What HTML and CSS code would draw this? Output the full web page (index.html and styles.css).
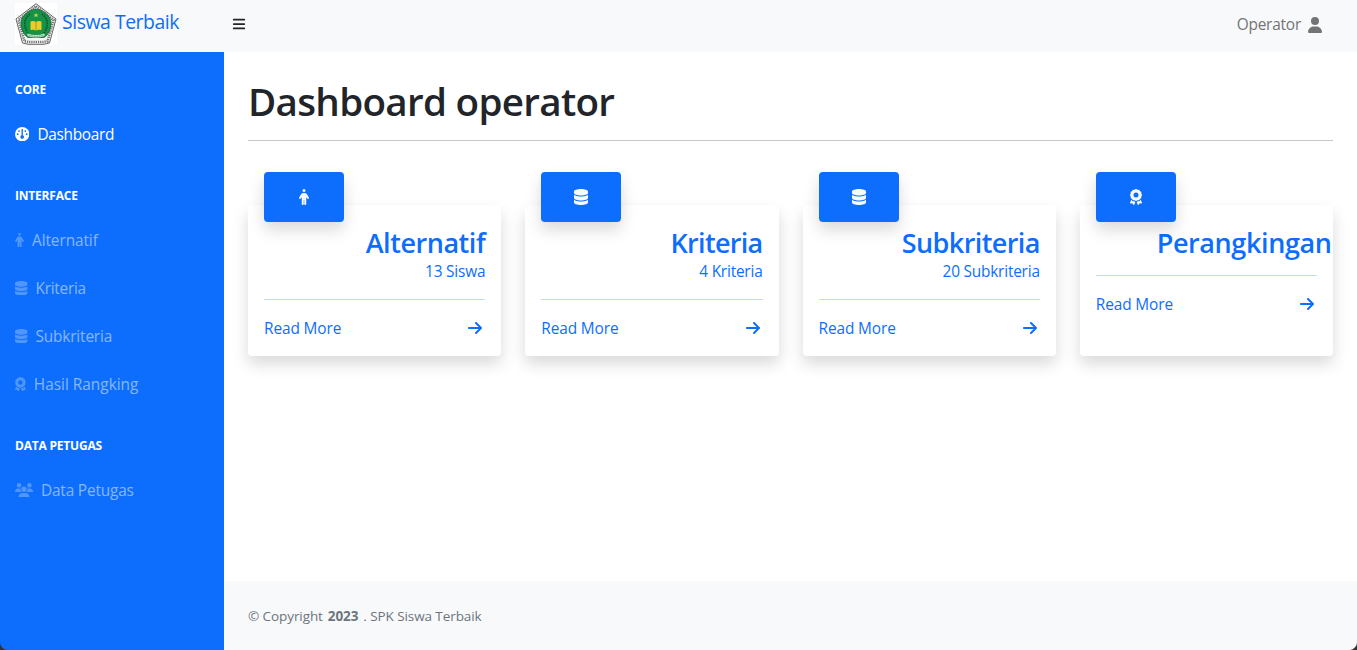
FILE: index.html
```html
<!DOCTYPE html>
<html lang="id">
<head>
<meta charset="utf-8">
<title>Siswa Terbaik</title>
<link rel="stylesheet" href="styles.css">
</head>
<body>
<svg class="sprite" aria-hidden="true">
  <symbol id="i-database" viewBox="0 0 448 512"><path d="M448 80v48c0 44.2-100.3 80-224 80S0 172.2 0 128V80C0 35.8 100.3 0 224 0S448 35.8 448 80zM393.2 214.7c20.8-7.4 39.9-16.9 54.8-28.6V288c0 44.2-100.3 80-224 80S0 332.2 0 288V186.1c14.9 11.8 34 21.2 54.8 28.6C99.7 230.7 159.5 240 224 240s124.3-9.3 169.2-25.3zM0 346.1c14.9 11.8 34 21.2 54.8 28.6C99.7 390.7 159.5 400 224 400s124.3-9.3 169.2-25.3c20.8-7.4 39.9-16.9 54.8-28.6V432c0 44.2-100.3 80-224 80S0 476.2 0 432V346.1z"/></symbol>
  <symbol id="i-user" viewBox="0 0 448 512"><path d="M224 256A128 128 0 1 0 224 0a128 128 0 1 0 0 256zm-45.7 48C79.8 304 0 383.8 0 482.3C0 498.7 13.3 512 29.7 512H418.3c16.4 0 29.7-13.3 29.7-29.7C448 383.8 368.2 304 269.7 304H178.3z"/></symbol>
  <symbol id="i-arrow" viewBox="0 0 448 512"><path d="M438.6 278.6c12.5-12.5 12.5-32.8 0-45.3l-160-160c-12.5-12.5-32.8-12.5-45.3 0s-12.5 32.8 0 45.3L338.8 224 32 224c-17.7 0-32 14.3-32 32s14.3 32 32 32l306.7 0L233.4 393.4c-12.5 12.5-12.5 32.8 0 45.3s32.8 12.5 45.3 0l160-160z"/></symbol>
  <symbol id="i-bars" viewBox="0 0 448 512"><rect y="64" width="448" height="64" rx="32"/><rect y="224" width="448" height="64" rx="32"/><rect y="384" width="448" height="64" rx="32"/></symbol>
  <symbol id="i-users" viewBox="0 0 640 512"><path d="M144 0a80 80 0 1 1 0 160A80 80 0 1 1 144 0zM512 0a80 80 0 1 1 0 160A80 80 0 1 1 512 0zM0 298.7C0 239.8 47.8 192 106.7 192h42.7c15.9 0 31 3.5 44.6 9.7c-1.3 7.2-1.9 14.7-1.9 22.3c0 38.2 16.8 72.5 43.3 96c-.2 0-.4 0-.7 0H21.3C9.6 320 0 310.4 0 298.7zM405.3 320c-.2 0-.4 0-.7 0c26.6-23.5 43.3-57.8 43.3-96c0-7.6-.7-15-1.9-22.3c13.6-6.3 28.7-9.7 44.6-9.7h42.7C592.2 192 640 239.8 640 298.7c0 11.8-9.6 21.3-21.3 21.3H405.3zM224 224a96 96 0 1 1 192 0 96 96 0 1 1 -192 0zM128 485.3C128 411.7 187.7 352 261.3 352H378.7C452.3 352 512 411.7 512 485.3c0 14.7-11.9 26.7-26.7 26.7H154.7c-14.7 0-26.7-11.9-26.7-26.7z"/></symbol>
  <symbol id="i-person" viewBox="0 0 320 512"><path d="M112 48a48 48 0 1 1 96 0 48 48 0 1 1-96 0zm40 304V480c0 17.700-14.300 32-32 32s-32-14.300-32-32V256.900L59.400 304.500c-9.100 15.100-28.800 20-43.900 10.900s-20-28.800-10.900-43.900l58.300-97c17.400-28.900 48.600-46.600 82.300-46.600h29.700c33.700 0 64.900 17.700 82.300 46.600l58.300 97c9.100 15.100 4.200 34.800-10.900 43.900s-34.800 4.200-43.900-10.900L232 256.900V480c0 17.700-14.300 32-32 32s-32-14.300-32-32V352H152z"/></symbol>
  <symbol id="i-award" viewBox="0 0 384 512"><path fill-rule="evenodd" d="M173.800 5.500c11-7.300 25.400-7.300 36.400 0L228 17.200c6 3.900 13 5.800 20.100 5.400l21.300-1.300c13.200-.8 25.600 6.400 31.500 18.200l9.600 19.100c3.200 6.400 8.400 11.500 14.700 14.700L344.500 83c11.800 5.900 19 18.300 18.200 31.500l-1.300 21.300c-.4 7.100 1.500 14.200 5.400 20.100l11.800 17.800c7.300 11 7.300 25.400 0 36.400L366.800 228c-3.900 6-5.800 13-5.400 20.100l1.300 21.300c.8 13.200-6.400 25.600-18.200 31.500l-19.100 9.600c-6.400 3.200-11.500 8.400-14.700 14.700L301 344.500c-5.900 11.800-18.300 19-31.500 18.200l-21.300-1.300c-7.100-.4-14.200 1.500-20.100 5.400l-17.800 11.800c-11 7.300-25.400 7.300-36.400 0L156 366.800c-6-3.900-13-5.800-20.100-5.400l-21.300 1.300c-13.200 .8-25.600-6.400-31.500-18.200l-9.600-19.100c-3.200-6.400-8.400-11.500-14.700-14.700L39.500 301c-11.800-5.900-19-18.300-18.200-31.500l1.300-21.300c.4-7.100-1.500-14.200-5.400-20.100L5.500 210.200c-7.300-11-7.300-25.400 0-36.400L17.200 156c3.900-6 5.800-13 5.400-20.100l-1.300-21.300c-.8-13.200 6.400-25.600 18.200-31.500l19.100-9.600C65 70.200 70.200 65 73.400 58.600L83 39.500c5.900-11.800 18.300-19 31.500-18.200l21.300 1.300c7.100 .4 14.200-1.500 20.100-5.400L173.800 5.500zM272 192a80 80 0 1 0-160 0 80 80 0 1 0 160 0z"/><path d="M1.300 441.800L44.400 339.300c.2 .1 .3 .2 .4 .4l9.600 19.100c11.700 23.200 36 37.300 62 35.800l21.300-1.300c.2 0 .5 0 .7 .2l17.800 11.800c5.100 3.300 10.500 5.900 16.100 7.700l-37.600 89.300c-2.300 5.500-7.400 9.200-13.300 9.700s-11.600-2.200-14.800-7.200L74.400 455.500l-56.100 8.300c-5.700 .8-11.400-1.500-15-6s-4.300-10.700-2-16zm248 60.400L211.700 413c5.600-1.800 11-4.300 16.100-7.700l17.800-11.800c.2-.1 .4-.2 .7-.2l21.300 1.300c26 1.500 50.300-12.600 62-35.800l9.600-19.100c.1-.2 .2-.3 .4-.4l43.200 102.500c2.200 5.300 1.400 11.400-2.100 16s-9.300 6.900-15 6l-56.100-8.300-32.200 49.200c-3.200 5-8.900 7.700-14.800 7.200s-11-4.300-13.300-9.700z"/></symbol>
  <symbol id="i-gauge" viewBox="0 0 512 512"><path fill-rule="evenodd" d="M0 256a256 256 0 1 1 512 0A256 256 0 1 1 0 256zm320 96c0-26.900-16.500-49.900-40-59.300V88c0-13.300-10.700-24-24-24s-24 10.700-24 24V292.700c-23.500 9.500-40 32.500-40 59.300 0 35.300 28.700 64 64 64s64-28.700 64-64zM144 176a32 32 0 1 0 0-64 32 32 0 1 0 0 64zm-16 80a32 32 0 1 0-64 0 32 32 0 1 0 64 0zm288 32a32 32 0 1 0 0-64 32 32 0 1 0 0 64zM400 144a32 32 0 1 0-64 0 32 32 0 1 0 64 0z"/></symbol>
</svg>

<header class="topnav">
  <a class="brand">
    <svg class="logo" viewBox="0 0 42 42">
      <rect width="42" height="42" fill="#fff"/>
      <path d="M21 .7 41 16 34.500 40 29 41.300H13L7.500 40 1 16Z" fill="#f6f6f6" stroke="#666" stroke-width="1"/>
      <path d="M21 3.200 38.500 17 32.500 38.300 28 39H14L9.500 38.300 3.500 17Z" fill="none" stroke="#777" stroke-width="2.600" stroke-dasharray="1.300 .9"/>
      <path d="M21 6C28 7 35 12 36 19c0 8-3 13-7 15.500H13C9 32 6 27 6 19 7 12 14 7 21 6Z" fill="#149447" stroke="#1b5c36" stroke-width=".8"/>
      <path d="M15 11c-6 4-7 12-2 19M27 11c6 4 7 12 2 19" fill="none" stroke="#0a542b" stroke-width="1.700" stroke-dasharray="1.500 1"/>
      <path d="m21 10 .8 1.600h1.600l-1.300 1.100.5 1.600-1.600-1-1.600 1 .5-1.600-1.300-1.100h1.600Z" fill="#d0cc40"/>
      <path d="M15.500 18.500q3-1 5.500.5 2.500-1.500 5.500-.5V27q-3-.8-5.500.5-2.500-1.300-5.500-.5Z" fill="#e5cf2c"/>
      <path d="M21 19v8.500" stroke="#8b8520" stroke-width=".7"/>
      <path d="M12.500 30.500q8.500 3 17 0v2.500q-8.500 3-17 0Z" fill="#c3e0c8"/>
      <path d="M14 32.300q7 2.300 14 0" fill="none" stroke="#3d8055" stroke-width=".8" stroke-dasharray="1 .7"/>
    </svg>
    <span class="brand-name">Siswa Terbaik</span>
  </a>
  <svg class="bars"><use href="#i-bars"/></svg>
  <div class="account"><span class="account-name">Operator</span><svg class="user"><use href="#i-user"/></svg></div>
</header>

<div class="layout">
  <nav class="sidebar">
    <h6 class="group">CORE</h6>
    <a class="item active"><svg class="w512"><use href="#i-gauge"/></svg><span class="t-dash">Dashboard</span></a>
    <h6 class="group">INTERFACE</h6>
    <a class="item"><svg class="w320"><use href="#i-person"/></svg><span class="t-alt">Alternatif</span></a>
    <a class="item"><svg class="w448"><use href="#i-database"/></svg><span class="t-kri">Kriteria</span></a>
    <a class="item"><svg class="w448"><use href="#i-database"/></svg><span>Subkriteria</span></a>
    <a class="item"><svg class="w384"><use href="#i-award"/></svg><span class="t-hasil">Hasil Rangking</span></a>
    <h6 class="group">DATA PETUGAS</h6>
    <a class="item"><svg class="w640"><use href="#i-users"/></svg><span>Data Petugas</span></a>
  </nav>

  <div class="content">
    <main class="main">
      <h1 class="title">Dashboard operator</h1>
      <section class="cards">
        <article class="card">
          <div class="badge"><svg class="b320"><use href="#i-person"/></svg></div>
          <h3 class="name">Alternatif</h3>
          <p class="count">13 Siswa</p>
          <a class="more"><span>Read More</span><svg><use href="#i-arrow"/></svg></a>
        </article>
        <article class="card">
          <div class="badge"><svg class="b448"><use href="#i-database"/></svg></div>
          <h3 class="name n-kri">Kriteria</h3>
          <p class="count">4 Kriteria</p>
          <a class="more"><span>Read More</span><svg><use href="#i-arrow"/></svg></a>
        </article>
        <article class="card">
          <div class="badge"><svg class="b448"><use href="#i-database"/></svg></div>
          <h3 class="name n-sub">Subkriteria</h3>
          <p class="count">20 Subkriteria</p>
          <a class="more"><span>Read More</span><svg><use href="#i-arrow"/></svg></a>
        </article>
        <article class="card">
          <div class="badge"><svg class="b384"><use href="#i-award"/></svg></div>
          <h3 class="name n-per">Perangkingan</h3>
          <a class="more"><span>Read More</span><svg><use href="#i-arrow"/></svg></a>
        </article>
      </section>
    </main>
    <footer class="footer">© Copyright <b>2023</b> . SPK Siswa Terbaik</footer>
  </div>
</div>
</body>
</html>
```
FILE: styles.css
```css
* { box-sizing: border-box; }
body { position: relative; margin: 0; height: 650px; overflow: hidden; display: flex; flex-direction: column; background: #fff; color: #212529; font: 15.4px/24px "Open Sans", "Noto Sans", sans-serif; }
h1, h3, h6, p { margin: 0; }
svg { fill: currentColor; flex: none; }
.sprite { position: absolute; width: 0; height: 0; }

/* rounded window corners */
body::before, body::after { content: ""; position: absolute; bottom: 0; width: 8px; height: 8px; z-index: 2; }
body::before { left: 0; background: radial-gradient(circle at 100% 0, transparent 7.5px, #333 8.5px); }
body::after { right: 0; background: radial-gradient(circle at 0 0, transparent 7.5px, #333 8.5px); }

.topnav { height: 52px; flex: none; display: flex; align-items: center; background: #f8f9fa; }
.brand { width: 232px; display: flex; align-items: center; padding: 0 0 4px 15px; color: #0d6efd; }
.logo { width: 42px; height: 42px; }
.brand-name { margin-left: 5px; padding-bottom: 4px; font-size: 19.4px; letter-spacing: -.45px; }
.bars { width: 14px; height: 14px; margin-bottom: 5px; color: #212529; }
.account { margin-left: auto; padding: 0 35px 3px 0; display: flex; align-items: center; color: #737475; }
.account-name { letter-spacing: -.2px; }
.user { width: 14px; height: 16px; margin-left: 7px; }

.layout { flex: 1; display: flex; min-height: 0; }
.sidebar { width: 224px; flex: none; background: #0d6efd; padding-left: 15px; }
.group { height: 58px; padding: 29px 0 11px; font-size: 12px; line-height: 18px; font-weight: 700; color: #fff; letter-spacing: -.2px; }
.item { height: 48px; display: flex; align-items: center; color: rgba(255,255,255,.5); letter-spacing: -.18px; }
.item span { padding-top: 2px; }
.item svg { height: 14.4px; margin-right: 8px; opacity: .55; }
.item.active { color: #fff; }
.item.active svg { opacity: 1; }
.item .t-dash { letter-spacing: -.3px; }
.item .t-kri { letter-spacing: -.28px; }
.item .t-alt { letter-spacing: -.08px; }
.item .t-hasil { letter-spacing: 0; }
.w320 { width: 9px; }
.w384 { width: 10.8px; }
.w448 { width: 12.6px; }
.w512 { width: 14.4px; }
.w640 { width: 18px; }

.content { flex: 1; min-width: 0; display: flex; flex-direction: column; }
.main { flex: 1; padding: 24px 24px 0; }
.title { height: 65px; padding-top: 1px; border-bottom: 1px solid #c8c8c9; font-size: 38.6px; line-height: 48px; font-weight: 560; letter-spacing: -.7px; white-space: nowrap; }
.cards { margin-top: 64px; display: grid; grid-template-columns: repeat(4, 253.25px); gap: 24px; }
.card { position: relative; height: 151px; padding: 21px 16px 0; border-radius: 4px; background: #fff; color: #0d6efd; box-shadow: 0 8px 16px rgba(0,0,0,.15); }
.badge { position: absolute; left: 16px; top: -33px; width: 80px; height: 50px; display: flex; align-items: center; justify-content: center; border-radius: 4px; background: #0d6efd; color: #f8f9fa; box-shadow: 0 8px 16px rgba(0,0,0,.15); }
.badge svg { height: 16px; }
.b320 { width: 10px; }
.b384 { width: 12px; }
.b448 { width: 14px; }
.name { font-size: 27px; line-height: 34px; font-weight: 560; text-align: right; white-space: nowrap; letter-spacing: -.45px; }
.n-kri { letter-spacing: -.7px; }
.n-sub { letter-spacing: -.6px; }
.n-per { margin: 0 -16px 0 61px; text-align: left; letter-spacing: -.4px; }
.count { text-align: right; letter-spacing: -.2px; }
.more { margin-top: 15px; padding: 16px 3px 0 0; border-top: 1px solid #c2dbfe; display: flex; align-items: center; justify-content: space-between; }
.more span { padding-top: 1px; margin-bottom: -1px; letter-spacing: -.1px; }
.more svg { width: 14px; height: 16px; }

.footer { height: 69px; flex: none; padding: 25px 24px; background: #f8f9fa; color: #6c757d; font-size: 13.5px; line-height: 21px; }
.footer b { margin: 0 1.5px; }
.footer { letter-spacing: -.08px; }
```
